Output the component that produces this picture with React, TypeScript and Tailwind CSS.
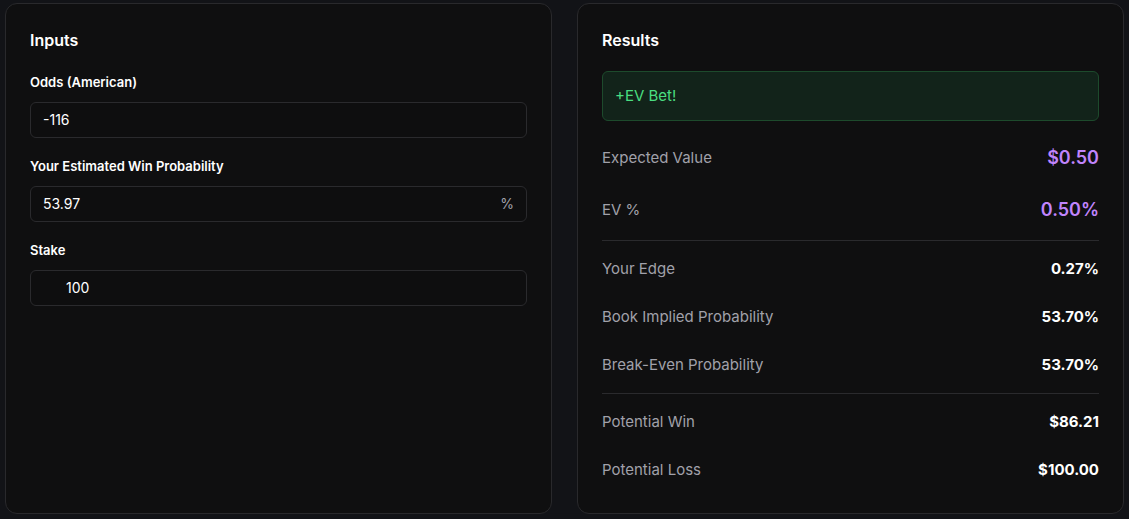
import React from 'react';

const font = { fontFamily: 'Inter, "Noto Sans", sans-serif' };

const Field: React.FC<{ label: string; value: string; suffix?: string; indent?: boolean }> = ({
  label,
  value,
  suffix,
  indent,
}) => (
  <div className="mb-[18px]">
    <div className="text-[13px] leading-5 font-semibold text-white">{label}</div>
    <div className="mt-2.5 flex h-9 items-center justify-between rounded-md border border-[#2a2a2d] bg-[#0e0e0f] pr-3">
      <span className={`text-sm text-white ${indent ? 'pl-[35px]' : 'pl-3'}`}>{value}</span>
      {suffix && <span className="text-sm text-[#a1a1aa]">{suffix}</span>}
    </div>
  </div>
);

const Row: React.FC<{ label: string; value: string; accent?: boolean }> = ({ label, value, accent }) => (
  <div className="flex items-center justify-between py-3">
    <span className="text-[15px] leading-6 text-[#a1a1aa]">{label}</span>
    {accent ? (
      <span className="text-lg leading-7 font-semibold text-[#c084fc]">{value}</span>
    ) : (
      <span className="text-[15px] leading-6 font-bold text-white">{value}</span>
    )}
  </div>
);

export default function App() {
  return (
    <div className="flex h-[519px] w-full gap-[25px] bg-[#121317] px-[5px] pt-[3px]" style={font}>
      {/* Inputs */}
      <div className="h-[511px] flex-1 rounded-xl border border-[#29292c] bg-[#0f0f10] p-6">
        <h2 className="mb-5 text-base leading-6 font-semibold text-white">Inputs</h2>
        <Field label="Odds (American)" value="-116" />
        <Field label="Your Estimated Win Probability" value="53.97" suffix="%" />
        <Field label="Stake" value="100" indent />
      </div>

      {/* Results */}
      <div className="h-[511px] flex-1 rounded-xl border border-[#29292c] bg-[#0f0f10] p-6">
        <h2 className="mb-[19px] text-base leading-6 font-semibold text-white">Results</h2>
        <div className="mb-[11px] flex h-[50px] items-center rounded-md border border-[#1d4a2c] bg-[#12231a] px-3">
          <span className="text-[15px] text-[#4ade80]">+EV Bet!</span>
        </div>
        <Row label="Expected Value" value="$0.50" accent />
        <Row label="EV %" value="0.50%" accent />
        <div className="my-1 h-px bg-[#2a2a2d]" />
        <Row label="Your Edge" value="0.27%" />
        <Row label="Book Implied Probability" value="53.70%" />
        <Row label="Break-Even Probability" value="53.70%" />
        <div className="my-1 h-px bg-[#2a2a2d]" />
        <Row label="Potential Win" value="$86.21" />
        <Row label="Potential Loss" value="$100.00" />
      </div>
    </div>
  );
}
